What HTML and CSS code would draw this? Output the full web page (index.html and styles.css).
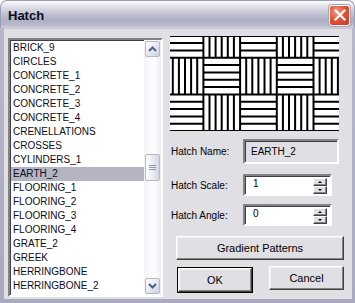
FILE: index.html
```html
<!DOCTYPE html>
<html lang="en">
<head>
  <meta charset="UTF-8">
  <title>Hatch</title>
  <link rel="stylesheet" href="styles.css">
</head>
<body>
  <div class="window">
    <div class="titlebar">
      <span class="title">Hatch</span>
      <div class="close">
        <svg width="12" height="12" viewBox="0 0 12 12"><path d="M1.5 1.5 L10.5 10.5 M10.5 1.5 L1.5 10.5" stroke="#fff" stroke-width="2.2" stroke-linecap="square"/></svg>
      </div>
    </div>
    <div class="client">
      <div class="listbox">
        <ul class="items">
          <li>BRICK_9</li>
          <li>CIRCLES</li>
          <li>CONCRETE_1</li>
          <li>CONCRETE_2</li>
          <li>CONCRETE_3</li>
          <li>CONCRETE_4</li>
          <li>CRENELLATIONS</li>
          <li>CROSSES</li>
          <li>CYLINDERS_1</li>
          <li class="selected">EARTH_2</li>
          <li>FLOORING_1</li>
          <li>FLOORING_2</li>
          <li>FLOORING_3</li>
          <li>FLOORING_4</li>
          <li>GRATE_2</li>
          <li>GREEK</li>
          <li>HERRINGBONE</li>
          <li>HERRINGBONE_2</li>
          <li>HOUNDSTOOTH</li>
        </ul>
        <div class="scrollbar">
          <div class="sbtn">
            <svg width="9" height="6" viewBox="0 0 9 6"><path d="M1 5 L4.5 1.5 L8 5" fill="none" stroke="#4d6185" stroke-width="2"/></svg>
          </div>
          <div class="track">
            <div class="thumb">
              <svg width="7" height="7" viewBox="0 0 7 7"><path d="M0 1.5 H7 M0 3.5 H7 M0 5.5 H7" stroke="#8e9aae" stroke-width="1"/></svg>
            </div>
          </div>
          <div class="sbtn">
            <svg width="9" height="6" viewBox="0 0 9 6"><path d="M1 1 L4.5 4.5 L8 1" fill="none" stroke="#4d6185" stroke-width="2"/></svg>
          </div>
        </div>
      </div>

      <div class="side">
        <svg class="preview" width="169" height="95" viewBox="0 0 169 95">
          <rect width="169" height="95" fill="#fff"/>
          <defs>
            <g id="htile">
              <path d="M0 7.3 H36.7 M0 14.7 H36.7 M0 22 H36.7 M0 29.4 H36.7" stroke="#000" stroke-width="2"/>
            </g>
            <g id="vtile">
              <path d="M6.1 0 V36.7 M12.2 0 V36.7 M18.3 0 V36.7 M24.4 0 V36.7 M30.5 0 V36.7" stroke="#000" stroke-width="2"/>
            </g>
          </defs>
          <g transform="translate(-3.3 -15)">
            <use href="#htile" x="0" y="0"/>
            <use href="#vtile" x="36.7" y="0"/>
            <use href="#htile" x="73.4" y="0"/>
            <use href="#vtile" x="110.1" y="0"/>
            <use href="#htile" x="146.8" y="0"/>
            <use href="#vtile" x="0" y="36.7"/>
            <use href="#htile" x="36.7" y="36.7"/>
            <use href="#vtile" x="73.4" y="36.7"/>
            <use href="#htile" x="110.1" y="36.7"/>
            <use href="#vtile" x="146.8" y="36.7"/>
            <use href="#htile" x="0" y="73.4"/>
            <use href="#vtile" x="36.7" y="73.4"/>
            <use href="#htile" x="73.4" y="73.4"/>
            <use href="#vtile" x="110.1" y="73.4"/>
            <use href="#htile" x="146.8" y="73.4"/>
            <path d="M36.7 0 V110 M73.4 0 V110 M110.1 0 V110 M146.8 0 V110 M0 36.7 H190 M0 73.4 H190" stroke="#000" stroke-width="2"/>
          </g>
          <path d="M0 0 H169" stroke="#000" stroke-width="2"/>
          <path d="M0 95 H169" stroke="#000" stroke-width="2"/>
        </svg>

        <div class="row name-row">
          <span class="label">Hatch Name:</span>
          <div class="field readonly">EARTH_2</div>
        </div>
        <div class="row">
          <span class="label">Hatch Scale:</span>
          <div class="field spin">
            <span class="value">1</span>
            <div class="spinbtns">
              <div class="spinbtn"><span class="tri up"></span></div>
              <div class="spinbtn"><span class="tri down"></span></div>
            </div>
          </div>
        </div>
        <div class="row">
          <span class="label">Hatch Angle:</span>
          <div class="field spin">
            <span class="value">0</span>
            <div class="spinbtns">
              <div class="spinbtn"><span class="tri up"></span></div>
              <div class="spinbtn"><span class="tri down"></span></div>
            </div>
          </div>
        </div>

        <div class="button gradient">Gradient Patterns</div>
        <div class="buttons">
          <div class="button ok">OK</div>
          <div class="button cancel">Cancel</div>
        </div>
      </div>
    </div>
  </div>
</body>
</html>
```

FILE: styles.css
```css
*{
  margin: 0;
  padding: 0;
  box-sizing: border-box;
}
body {
  width: 355px;
  height: 303px;
  overflow: hidden;
  background: #fff;
  font-family: "Liberation Sans", Arial, sans-serif;
  font-size: 10px;
  color: #000;
}

.window {
  width: 355px;
  height: 303px;
  display: flex;
  flex-direction: column;
  border-radius: 7px 7px 0 0;
  background: linear-gradient(#b9b9cc, #a9a9bf);
  overflow: hidden;
}

.titlebar {
  height: 28px;
  flex: none;
  display: flex;
  align-items: center;
  justify-content: space-between;
  padding: 0 4px 0 7px;
  background: linear-gradient(#fdfdfe 0%, #e4e4ec 18%, #c4c4d4 45%, #afafc4 70%, #b9b9cc 88%, #cfcfdc 100%);
  border-radius: 7px 7px 0 0;
  border: 1px solid #9c9cb4;
  border-bottom: none;
}
.title {
  font-weight: bold;
  font-size: 13px;
  color: #0b0b12;
  margin-top: 1px;
}
.close {
  width: 21px;
  height: 21px;
  margin-top: 1px;
  border-radius: 3px;
  border: 1px solid #fff;
  background: radial-gradient(circle at 35% 30%, #f29a83 0%, #e0563a 45%, #c7341f 100%);
  display: flex;
  align-items: center;
  justify-content: center;
  box-shadow: 0 0 0 1px #b0a0a8;
}

.client {
  flex: 1;
  margin: 0 3px 4px 4px;
  background: #e0dfe3;
  display: flex;
  padding: 9px 0 0 4px;
  gap: 7px;
  border-top: 1px solid #c9c9d6;
}

.listbox {
  width: 155px;
  height: 259px;
  display: flex;
  border: 2px solid;
  border-color: #848284 #fff #fff #848284;
  box-shadow: inset 1px 1px 0 #404040;
  background: #fff;
  overflow: hidden;
}
.items {
  list-style: none;
  flex: 1;
  padding-top: 1px;
  padding-left: 1px;
}
.items li {
  height: 14px;
  line-height: 14px;
  padding-left: 2px;
  white-space: nowrap;
  color: #0b0b20;
}
.items li.selected {
  background: #b4b4c2;
}

.scrollbar {
  width: 17px;
  display: flex;
  flex-direction: column;
  background: linear-gradient(90deg, #f3f3f7, #fefefe 60%, #eeeef4);
  padding: 1px 0;
}
.sbtn {
  height: 16px;
  flex: none;
  margin: 0 1px;
  border: 1px solid #b7b7c6;
  border-radius: 2px;
  background: linear-gradient(135deg, #ffffff, #e4e4ec 60%, #cfcfdc);
  display: flex;
  align-items: center;
  justify-content: center;
}
.track {
  flex: 1;
  padding-top: 97px;
}
.thumb {
  height: 27px;
  margin: 0 1px;
  border: 1px solid #b7b7c6;
  border-radius: 2px;
  background: linear-gradient(90deg, #fdfdfe, #e8e8f0 60%, #d7d7e2);
  display: flex;
  align-items: center;
  justify-content: center;
}

.side {
  width: 174px;
  display: flex;
  flex-direction: column;
}
.preview {
  display: block;
  margin-top: -2px;
}

.row {
  display: flex;
  align-items: center;
  padding-left: 1px;
}
.label {
  width: 72px;
}
.name-row {
  margin-top: 8px;
}
.name-row + .row {
  margin-top: 10px;
}
.row + .row + .row {
  margin-top: 8px;
}
.field {
  border: 2px solid;
  border-color: #848284 #fff #fff #848284;
  box-shadow: inset 1px 1px 0 #404040;
  background: #fff;
  padding-left: 6px;
}
.readonly {
  width: 96px;
  height: 25px;
  line-height: 21px;
  background: #e0dfe3;
}
.spin {
  width: 89px;
  height: 22px;
  display: flex;
  align-items: flex-start;
  justify-content: space-between;
  padding: 2px 3px 0 8px;
}
.value {
  line-height: 12px;
}
.spinbtns {
  display: flex;
  flex-direction: column;
  gap: 0;
}
.spinbtn {
  width: 14px;
  height: 8px;
  background: #e0dfe3;
  border: 1px solid;
  border-color: #fff #404040 #404040 #fff;
  box-shadow: inset -1px -1px 0 #848284;
  display: flex;
  align-items: center;
  justify-content: center;
}
.tri {
  width: 0;
  height: 0;
  border-left: 2px solid transparent;
  border-right: 2px solid transparent;
}
.tri.up {
  border-bottom: 2px solid #000;
}
.tri.down {
  border-top: 2px solid #000;
}

.button {
  display: flex;
  align-items: center;
  justify-content: center;
  font-size: 11px;
  background: #e0dfe3;
  border: 1px solid;
  border-color: #fff #404040 #404040 #fff;
  box-shadow: inset -1px -1px 0 #848284, inset 1px 1px 0 #f0f0f0;
}
.gradient {
  width: 168px;
  height: 24px;
  margin: 10px 0 0 6px;
}
.buttons {
  display: flex;
  justify-content: space-between;
  margin: 6px 0 0 8px;
}
.ok {
  width: 74px;
  height: 24px;
  margin-top: 2px;
  outline: 1px solid #000;
  outline-offset: 0;
}
.cancel {
  width: 75px;
  height: 24px;
}
```
